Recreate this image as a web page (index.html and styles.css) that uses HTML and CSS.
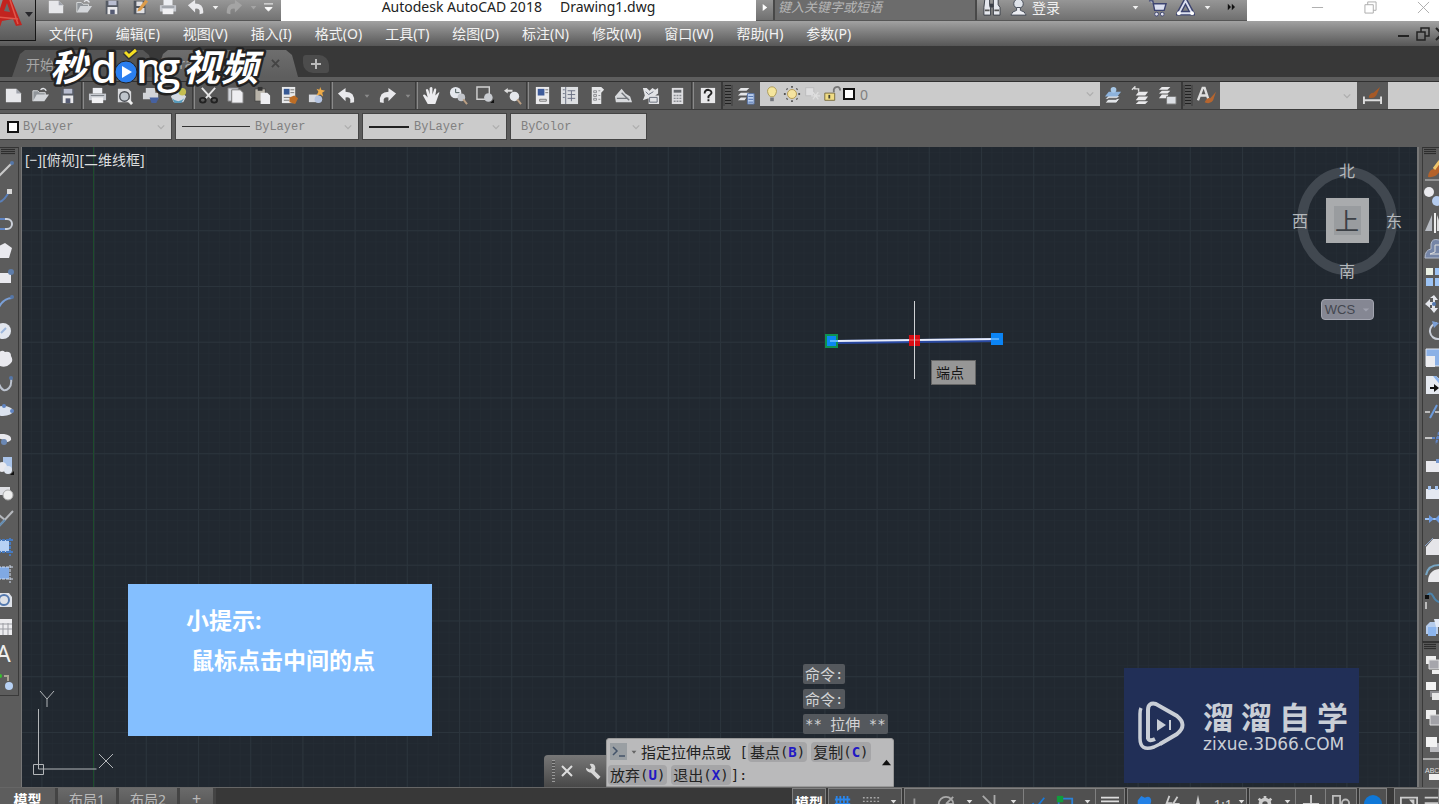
FILE: index.html
```html
<!DOCTYPE html>
<html lang="zh-CN">
<head>
<meta charset="utf-8">
<title>Autodesk AutoCAD 2018</title>
<link rel="stylesheet" href="styles.css">
</head>
<body>
<svg class="defs" aria-hidden="true">
  <symbol id="new" viewBox="0 0 20 20"><path d="M2 3h11l5 5v9H2z" fill="#e6e7ea"/><path d="M13 3v5h5z" fill="#9fa3ab"/></symbol>
  <symbol id="open" viewBox="0 0 20 20"><path d="M2 16V5h5l2 2h6v3" fill="#8f9499" stroke="#dadcde"/><path d="M2 16l4-7h13l-5 7z" fill="#d3d6da"/><path d="M10 4q4-3 6 1" fill="none" stroke="#e4e6ea" stroke-width="1.5"/></symbol>
  <symbol id="save" viewBox="0 0 20 20"><path d="M3 3h14v15H3z" fill="#565b64"/><path d="M6 3h9v5H6z" fill="#b8bdd0"/><path d="M5 10h11v8H5z" fill="#e9e9eb"/><path d="M8 13h5v5H8z" fill="#555b73"/></symbol>
  <symbol id="saveas" viewBox="0 0 20 20"><path d="M3 3h13v15H3z" fill="#50555d"/><path d="M6 4h7v5H6zM6 11h9v6H6z" fill="#e0e0e3"/><path d="M8 12L16 2l3 2-8 10-4 1z" fill="#dc9c4b"/></symbol>
  <symbol id="print" viewBox="0 0 20 20"><path d="M5 2h10v6H5z" fill="#eceef2"/><path d="M1 8h18v7H1z" fill="#c7cad0"/><path d="M4 12h12v6H4z" fill="#f0f0f2"/><path d="M3 10h14" stroke="#777b82"/></symbol>
  <symbol id="preview" viewBox="0 0 20 20"><path d="M3 3h11l3 3v11H3z" fill="#d9dadd"/><circle cx="10" cy="11" r="5" fill="#bfc5cc" stroke="#4b4f55" stroke-width="1.5"/><path d="M14 15l4 4" stroke="#eee" stroke-width="3"/></symbol>
  <symbol id="publish" viewBox="0 0 20 20"><path d="M4 2h10v5H4zM1 7h16v7H1z" fill="#d2d4d8"/><path d="M8 12h10l-3 6h-5z" fill="#4661a0"/></symbol>
  <symbol id="dwf" viewBox="0 0 20 20"><path d="M2 11l8-8 8 8-3 6H5z" fill="#d5dae1"/><circle cx="14" cy="6" r="4" fill="#c4bd50"/><path d="M3 13q7 6 13 0l-3 5H6z" fill="#5799b9"/></symbol>
  <symbol id="cut" viewBox="0 0 20 20"><path d="M3 2l10 11M17 2L7 13" stroke="#e4e4e4" stroke-width="2"/><ellipse cx="4" cy="15" rx="3" ry="2.500" fill="none" stroke="#222" stroke-width="2"/><ellipse cx="16" cy="15" rx="3" ry="2.500" fill="none" stroke="#222" stroke-width="2"/></symbol>
  <symbol id="copy" viewBox="0 0 20 20"><path d="M2 2h11v14H2z" fill="#d1d4da" stroke="#777"/><path d="M6 4h9l3 3v11H6z" fill="#eeeef1" stroke="#777"/></symbol>
  <symbol id="paste" viewBox="0 0 20 20"><path d="M2 3h11v13H2z" fill="#b9b4aa" stroke="#444"/><path d="M5 1h5v4H5z" fill="#333"/><path d="M8 7h7l3 3v9H8z" fill="#eeeef1"/></symbol>
  <symbol id="match" viewBox="0 0 20 20"><path d="M2 1h14v17H2z" fill="#e8e9eb"/><path d="M4 3h6v6H4z" fill="#365995"/><path d="M11 4h4M11 7h4M4 12h7M4 15h6" stroke="#777"/><path d="M10 12l5-2 4 3-3 6-6-2z" fill="#bd6d25"/></symbol>
  <symbol id="blockedit" viewBox="0 0 20 20"><path d="M2 9h10v8H2z" fill="#d7d9df"/><circle cx="12" cy="14" r="4" fill="#b5c4e0"/><path d="M14 1l1 3 4 1-3 2 1 4-3-2-4 1 2-4-2-3 3 1z" fill="#edaa48"/></symbol>
  <symbol id="undo" viewBox="0 0 20 20"><path d="M1 8l8-6v4q10 0 9 11l-4 1v-4q-1-3-5-2v4z" fill="#e9e9ec"/></symbol>
  <symbol id="redo" viewBox="0 0 20 20"><path d="M19 8l-8-6v4Q1 6 2 17l4 1v-4q1-3 5-2v4z" fill="currentColor"/></symbol>
  <symbol id="pan" viewBox="0 0 20 20"><path d="M6 19L1 10q1-2 3 0l2 2L4 4q2-2 3 1l1 4V2q2-2 3 0v7l2-6q2-1 2 1l-1 6 3-3q2-1 1 1l-4 11z" fill="#ececef"/></symbol>
  <symbol id="zoomrt" viewBox="0 0 20 20"><circle cx="7" cy="7" r="6" fill="#e4e7ed"/><path d="M7 3v4h4" stroke="#455" fill="none"/><circle cx="13" cy="12" r="4" fill="#c1c4ca"/><path d="M15 14l4 5" stroke="#bb9f83" stroke-width="2"/></symbol>
  <symbol id="zoomwin" viewBox="0 0 20 20"><path d="M1 1h13v13H1z" fill="none" stroke="#d2d2d2" stroke-width="1.500"/><circle cx="13" cy="12" r="4.500" fill="#c9ccd1"/><path d="M15 18h4v-4z" fill="#111"/></symbol>
  <symbol id="zoomprev" viewBox="0 0 20 20"><path d="M1 5l4-3v2h5v2H5v2z" fill="#ddd"/><circle cx="12" cy="11" r="5" fill="#e4e7eb"/><path d="M15 14l4 5" stroke="#bb9f83" stroke-width="2"/></symbol>
  <symbol id="props" viewBox="0 0 20 20"><path d="M3 1h14v18H3z" fill="#eaeaec"/><path d="M5 3h7v7H5z" fill="#3e5b9a"/><path d="M13 4h3M13 7h3M7 14h7v2H7z" stroke="#777" fill="none"/></symbol>
  <symbol id="dc" viewBox="0 0 20 20"><path d="M1 1h18v18H1z" fill="#dddfe2"/><path d="M6 1v18M12 5v11M8 5h8M8 9h8M8 13h8M3 4h2M3 8h2M3 12h2" stroke="#697083" fill="none"/></symbol>
  <symbol id="palette" viewBox="0 0 20 20"><path d="M5 1h10l3 3-3 3v12H5z" fill="#e4e5e7"/><path d="M7 5h3v2H7zm0 4h3v2H7zm0 4h3v2H7zM12 5h2m-2 5h2m-2 4h2" stroke="#8c8d91" fill="none"/></symbol>
  <symbol id="sheet" viewBox="0 0 20 20"><path d="M1 11L8 3l4 5 5 3 2 6H2z" fill="#d8dadd"/><path d="M8 7l8 8M3 13h12" stroke="#73777d" stroke-width="1.500"/></symbol>
  <symbol id="markup" viewBox="0 0 20 20"><path d="M2 2h4l3 3 3-3 3 2 3-2v6l-3 2h4v9H8v-6l-6 2 2-5z" fill="#e2e3e6"/><path d="M5 6l3 3 5-3M9 12h8v5H9z" stroke="#666d7a" fill="none"/></symbol>
  <symbol id="calc" viewBox="0 0 20 20"><path d="M4 2h12v17H4z" fill="#dddde0"/><path d="M6 4h8v3H6z" fill="#65686d"/><path d="M6 10h8M6 13h8M6 16h8" stroke="#8b8e93" stroke-width="1.500" stroke-dasharray="2 1"/></symbol>
  <symbol id="help" viewBox="0 0 20 20"><path d="M3 2h15v16H3z" fill="#e8e8ea"/><path d="M7 8q0-4 4-4 4 1 3 4l-3 3v2m0 1v2" stroke="#222" fill="none" stroke-width="2"/></symbol>
  <symbol id="layers" viewBox="0 0 20 20"><path d="M4 2h9l-3 3H1zM4 7h9l-3 3H1zM4 12h6l-2 3H1z" fill="#e5e6e8"/><path d="M11 8h7v11h-7z" fill="#bcd0ee" stroke="#5974a4"/><path d="M12 11h5m-5 3h5m-5 3h5" stroke="#4a6caa"/></symbol>
  <symbol id="layercur" viewBox="0 0 20 20"><path d="M5 13h12l-4 5H1zM5 10h12l-4 4H1z" fill="#e2e5e9" stroke="#555"/><path d="M5 6h13l-4 5H1z" fill="#8eb3dc"/><circle cx="10" cy="4" r="3" fill="#a7c8e8"/></symbol>
  <symbol id="layerprev" viewBox="0 0 20 20"><path d="M8 6h10l-3 4H5zM8 11h10l-3 4H5zM8 16h10l-3 3H5z" fill="#e9e9eb"/><path d="M1 4l3-3v2h4v3" fill="none" stroke="#ddd" stroke-width="1.500"/></symbol>
  <symbol id="layerstate" viewBox="0 0 20 20"><path d="M4 1h9l-3 3H1zM4 5h9l-3 3H1zM4 9h7l-2 4H1z" fill="#e9e9eb"/><path d="M9 11h10v8H9z" fill="#dcdfe4" stroke="#777"/></symbol>
  <symbol id="bulb" viewBox="0 0 20 20"><path d="M5 7a5 5 0 0 1 10 0q0 3-3 6H8Q5 10 5 7z" fill="#f4e59c" stroke="#aa9857"/><path d="M8 14h4v4H8z" fill="#75787e"/></symbol>
  <symbol id="sun" viewBox="0 0 20 20"><circle cx="10" cy="10" r="5" fill="#f5e3a0" stroke="#b3964c"/><path d="M10 1v2m0 14v2M1 10h2m14 0h2M4 4l1 1m10 10 1 1m0-12-1 1M5 15l-1 1" stroke="#555" stroke-width="2"/></symbol>
  <symbol id="vpfreeze" viewBox="0 0 20 20"><path d="M3 3h9v9H3z" fill="#dededf" stroke="#bbb"/><path d="M11 8l6 8M17 8l-6 8M9 12h10" stroke="#dfdfdf" stroke-width="1.500"/></symbol>
  <symbol id="lock" viewBox="0 0 20 20"><path d="M2 9h11v8H2z" fill="#f0dc84" stroke="#74683a"/><path d="M12 8V5q1-3 4-3t3 4" fill="none" stroke="#777" stroke-width="2"/><path d="M7 11v4" stroke="#443" stroke-width="2"/></symbol>
  <symbol id="textstyle" viewBox="0 0 20 20"><path d="M1 15L6 2h2l4 12M3 10h7" fill="none" stroke="#dedede" stroke-width="2.500"/><path d="M8 17q3-6 6-4l6-7-3 9q-3 5-9 2z" fill="#b5652f"/></symbol>
  <symbol id="dimstyle" viewBox="0 0 20 20"><path d="M1 11v8M19 11v8M1 15h18" stroke="#ddd" stroke-width="2"/><path d="M6 12q1-5 5-5l7-6-4 9q-3 4-8 2z" fill="#a55927"/></symbol>
  <symbol id="dd" viewBox="0 0 10 10"><path d="M1 3h8L5 8z" fill="currentColor"/></symbol>
  <symbol id="chev" viewBox="0 0 10 10"><path d="M1 3l4 4 4-4" fill="none" stroke="#adadad" stroke-width="1.500"/></symbol>
</svg>

<header class="titlebar">
  <nav class="quick" aria-label="快速访问">
    <button aria-label="新建"><svg><use href="#new"/></svg></button>
    <button aria-label="打开"><svg><use href="#open"/></svg></button>
    <button aria-label="保存"><svg><use href="#save"/></svg></button>
    <button aria-label="另存为"><svg><use href="#saveas"/></svg></button>
    <button aria-label="打印"><svg><use href="#print"/></svg></button>
    <button aria-label="放弃"><svg><use href="#undo"/></svg></button>
    <button class="drop" aria-label="放弃列表"><svg><use href="#dd"/></svg></button>
    <button class="dim" aria-label="重做"><svg><use href="#redo"/></svg></button>
    <button class="drop dim" aria-label="重做列表"><svg><use href="#dd"/></svg></button>
    <button class="drop custom" aria-label="自定义"><svg viewBox="0 0 10 10"><path d="M0 1h10M1 5h8L5 9z" fill="#fff" stroke="#fff"/></svg></button>
  </nav>
  <div class="caption"><span>Autodesk AutoCAD 2018</span><span>Drawing1.dwg</span></div>
  <div class="infocenter">
    <button class="flip" aria-label="折叠"><svg viewBox="0 0 10 10"><path d="M3 1l5 4-5 4z" fill="#fff"/></svg></button>
    <input class="search" type="text" placeholder="键入关键字或短语" aria-label="搜索">
    <button class="find" aria-label="查找"><svg viewBox="0 0 20 20"><path d="M3 1h5v6l1 3v8H2v-8zM12 1h5v6l2 3v8h-7v-8z" fill="#e6e8ee" stroke="#3b3f48"/><path d="M8 6h4v4H8z" fill="#3b3f48"/><path d="M3 13h5m5 0h5" stroke="#555" stroke-width="2"/></svg></button>
    <button class="login"><svg viewBox="0 0 20 20"><circle cx="10" cy="6" r="5" fill="#dfe3ea" stroke="#454b56"/><path d="M2 18q1-4 6-5v-3h4v3q5 1 6 5z" fill="#eceef3" stroke="#454b56"/></svg>登录</button>
    <button class="drop" aria-label="登录选项"><svg><use href="#dd"/></svg></button>
    <button class="find" aria-label="商店"><svg viewBox="0 0 20 20"><path d="M1 3h4l2 10h10l2-7H6" fill="#dce0f0" stroke="#3d4470" stroke-width="1.500"/><circle cx="9" cy="17" r="2" fill="#e4e4f0" stroke="#3d4470"/><circle cx="15" cy="17" r="2" fill="#e4e4f0" stroke="#3d4470"/></svg></button>
    <button class="find" aria-label="应用"><svg viewBox="0 0 20 20"><path d="M10 3L3 16h14z" fill="none" stroke="#3d4470" stroke-width="5"/><path d="M10 3L3 16h14z" fill="none" stroke="#dce0f0" stroke-width="2"/><circle cx="3" cy="16" r="2" fill="#fff"/><circle cx="17" cy="16" r="2" fill="#fff"/></svg></button>
    <button class="drop" aria-label="应用列表"><svg><use href="#dd"/></svg></button>
    <button class="more" aria-label="更多"><svg viewBox="0 0 10 10"><path d="M1 1l4 4-4 4zM6 1l4 4-4 4z" fill="#111"/></svg></button>
  </div>
  <div class="window">
    <button aria-label="最小化"><svg viewBox="0 0 14 14"><path d="M1 7h12" stroke="#aaa"/></svg></button>
    <button aria-label="还原"><svg viewBox="0 0 14 14"><path d="M1 4h9v9H1zM4 4V1h9v9h-3" stroke="#aaa" fill="none"/></svg></button>
    <button aria-label="关闭"><svg viewBox="0 0 14 14"><path d="M1 1l12 12M13 1L1 13" stroke="#aaa"/></svg></button>
  </div>
</header>

<button class="appmenu" aria-label="应用程序菜单"><svg viewBox="0 0 36 40"><path d="M-6 27L4-4h6l12 29-6 1-3-7-11 2-2 6z" fill="#c2241f"/><path d="M4 11l3-8 3 9z" fill="#6a6a6a"/><path d="M-2 17l20 2M9-3l9 27" stroke="#e0574b" stroke-width="1.500"/><path d="M25 12h8l-4 5z" fill="#27272b"/></svg></button>

<div class="menubar">
  <nav>
    <a href="#">文件(F)</a><a href="#">编辑(E)</a><a href="#">视图(V)</a><a href="#">插入(I)</a><a href="#">格式(O)</a><a href="#">工具(T)</a><a href="#">绘图(D)</a><a href="#">标注(N)</a><a href="#">修改(M)</a><a href="#">窗口(W)</a><a href="#">帮助(H)</a><a href="#">参数(P)</a>
  </nav>
  <div class="docwin">
    <button aria-label="最小化文档"><svg viewBox="0 0 14 14"><path d="M1 9h11" stroke="#222" stroke-width="2"/></svg></button>
    <button aria-label="还原文档"><svg viewBox="0 0 14 14"><path d="M1 5h8v8H1zM5 5V1h8v8H9" stroke="#222" stroke-width="1.500" fill="none"/></svg></button>
    <button aria-label="关闭文档"><svg viewBox="0 0 14 14"><path d="M1 1l12 12M13 1L1 13" stroke="#222" stroke-width="2"/></svg></button>
  </div>
</div>

<div class="filetabs">
  <button class="ftab">开始</button>
  <button class="ftab active"><span>Drawing1*</span><svg viewBox="0 0 10 10"><path d="M1 1l8 8M9 1L1 9" stroke="#444" stroke-width="2"/></svg></button>
  <button class="ftab add" aria-label="新图形"><svg viewBox="0 0 10 10"><path d="M5 0v10M0 5h10" stroke="#bbb" stroke-width="2"/></svg></button>
</div>

<svg class="mark" viewBox="0 0 220 56" role="img" aria-label="秒dong视频">
  <g class="mark-text">
    <text class="han" x="5" y="36">秒</text>
    <text class="lat" x="46" y="38">d</text>
    <text class="lat" x="91" y="38">n</text>
    <text class="lat" x="112" y="38">g</text>
    <text class="han" x="138" y="36">视</text>
    <text class="han" x="176" y="36">频</text>
  </g>
  <circle cx="81" cy="27" r="11" fill="#2b7ff0" stroke="#222" stroke-width="1"/>
  <path d="M77 21l10 6-10 6z" fill="#fff"/>
  <path d="M80 7l4 4 7-6" fill="none" stroke="#333" stroke-width="6"/>
  <path d="M80 7l4 4 7-6" fill="none" stroke="#f6df22" stroke-width="3"/>
</svg>

<div class="toolbar">
  <div class="tools">
    <button aria-label="新建"><svg><use href="#new"/></svg></button><button aria-label="打开"><svg><use href="#open"/></svg></button><button aria-label="保存"><svg><use href="#save"/></svg></button>
    <i></i>
    <button aria-label="打印"><svg><use href="#print"/></svg></button><button aria-label="预览"><svg><use href="#preview"/></svg></button><button aria-label="发布"><svg><use href="#publish"/></svg></button><button aria-label="三维打印"><svg><use href="#dwf"/></svg></button>
    <i></i>
    <button aria-label="剪切"><svg><use href="#cut"/></svg></button><button aria-label="复制"><svg><use href="#copy"/></svg></button><button aria-label="粘贴"><svg><use href="#paste"/></svg></button><button aria-label="特性匹配"><svg><use href="#match"/></svg></button><button aria-label="块编辑器"><svg><use href="#blockedit"/></svg></button>
    <i></i>
    <button aria-label="放弃"><svg><use href="#undo"/></svg></button><button class="drop" aria-label="放弃列表"><svg><use href="#dd"/></svg></button><button aria-label="重做"><svg><use href="#redo"/></svg></button><button class="drop" aria-label="重做列表"><svg><use href="#dd"/></svg></button>
    <i></i>
    <button aria-label="平移"><svg><use href="#pan"/></svg></button><button aria-label="实时缩放"><svg><use href="#zoomrt"/></svg></button><button aria-label="窗口缩放"><svg><use href="#zoomwin"/></svg></button><button aria-label="缩放上一个"><svg><use href="#zoomprev"/></svg></button>
    <i></i>
    <button aria-label="特性"><svg><use href="#props"/></svg></button><button aria-label="设计中心"><svg><use href="#dc"/></svg></button><button aria-label="工具选项板"><svg><use href="#palette"/></svg></button><button aria-label="图纸集"><svg><use href="#sheet"/></svg></button><button aria-label="标记集"><svg><use href="#markup"/></svg></button><button aria-label="计算器"><svg><use href="#calc"/></svg></button>
    <i></i>
    <button aria-label="帮助"><svg><use href="#help"/></svg></button>
  </div>
  <div class="tools layertools">
    <b class="grip"></b>
    <button aria-label="图层特性"><svg><use href="#layers"/></svg></button>
    <div class="combo layercombo">
      <svg><use href="#bulb"/></svg><svg><use href="#sun"/></svg><svg><use href="#vpfreeze"/></svg><svg><use href="#lock"/></svg><em class="swatch"></em>
      <select aria-label="图层"><option>0</option></select><svg class="chev"><use href="#chev"/></svg>
    </div>
    <button aria-label="置为当前"><svg><use href="#layercur"/></svg></button><button aria-label="上一个图层"><svg><use href="#layerprev"/></svg></button><button aria-label="图层状态"><svg><use href="#layerstate"/></svg></button>
  </div>
  <div class="tools">
    <b class="grip"></b>
    <button aria-label="文字样式"><svg><use href="#textstyle"/></svg></button>
    <div class="combo textcombo"><select aria-label="文字样式列表"><option></option></select><svg class="chev"><use href="#chev"/></svg></div>
    <button class="wide" aria-label="标注样式"><svg><use href="#dimstyle"/></svg></button>
    <div class="combo dimcombo"><select aria-label="标注样式列表"><option></option></select></div>
  </div>
</div>

<div class="propbar">
  <div class="combo color"><em class="swatch"></em><select aria-label="颜色"><option>ByLayer</option></select><svg class="chev"><use href="#chev"/></svg></div>
  <div class="combo ltype"><em class="line"></em><select aria-label="线型"><option>ByLayer</option></select><svg class="chev"><use href="#chev"/></svg></div>
  <div class="combo lweight"><em class="line thick"></em><select aria-label="线宽"><option>ByLayer</option></select><svg class="chev"><use href="#chev"/></svg></div>
  <div class="combo pstyle"><select aria-label="打印样式"><option>ByColor</option></select><svg class="chev"><use href="#chev"/></svg></div>
</div>

<main class="work">
  <aside class="side left">
    <div class="sidepanel">
      <b class="sgrip"></b>
      <button aria-label="直线"><svg viewBox="0 0 16 27"><path d="M-2 22L12 8" stroke="#c9c9c9" stroke-width="2"/><circle cx="12" cy="8" r="2" fill="#5577a8"/></svg></button>
      <button aria-label="构造线"><svg viewBox="0 0 16 27"><path d="M-1 20q5-1 10-10" stroke="#5a7fb8" stroke-width="2" fill="none"/><path d="M7 7h5v5H7z" fill="#d8d8d8"/></svg></button>
      <button aria-label="多段线"><svg viewBox="0 0 16 27"><path d="M0 10h7a5 5 0 0 1 0 10H0" fill="none" stroke="#ccd1da" stroke-width="2"/><path d="M0 10h5M0 20h5" stroke="#5f84c2" stroke-width="2"/></svg></button>
      <button aria-label="多边形"><svg viewBox="0 0 16 27"><path d="M-3 11L5 7l7 5-3 10h-12z" fill="#e9e9ee"/></svg></button>
      <button aria-label="矩形"><svg viewBox="0 0 16 27"><path d="M-2 10h13v10H-2z" fill="#e9e9ee"/><circle cx="11" cy="9" r="3" fill="#5f7da9"/></svg></button>
      <button aria-label="圆弧"><svg viewBox="0 0 16 27"><path d="M-1 17Q4 8 12 8" fill="none" stroke="#7a9fd6" stroke-width="2"/><circle cx="12" cy="7" r="2" fill="#5577a8"/></svg></button>
      <button aria-label="圆"><svg viewBox="0 0 16 27"><circle cx="3" cy="14" r="8" fill="#e2e6ee"/><path d="M1 16l5-5" stroke="#9db7dc" stroke-width="2"/></svg></button>
      <button aria-label="修订云线"><svg viewBox="0 0 16 27"><path d="M-2 9q4-4 7-1 6-1 6 4 3 5-1 8-5 5-12 1z" fill="#e9e9ee"/></svg></button>
      <button aria-label="样条曲线"><svg viewBox="0 0 16 27"><path d="M-1 13q4 10 10 4 3-3 2-10" fill="none" stroke="#bcc3cf" stroke-width="2"/><circle cx="11" cy="7" r="2" fill="#5577a8"/></svg></button>
      <button aria-label="椭圆"><svg viewBox="0 0 16 27"><ellipse cx="3" cy="13" rx="10" ry="5" fill="#dbe2ee"/><circle cx="4" cy="8" r="2" fill="#5f84c2"/><circle cx="12" cy="13" r="2" fill="#5f84c2"/></svg></button>
      <button aria-label="椭圆弧"><svg viewBox="0 0 16 27"><path d="M-3 9h7q8 1 7 6-4 4-7 0l-7-2z" fill="#e9e9ee"/><circle cx="4" cy="17" r="3" fill="#6b88b4"/></svg></button>
      <button aria-label="插入块"><svg viewBox="0 0 16 27"><path d="M3 5h9v14H3z" fill="#a9c3e9"/><circle cx="2" cy="15" r="5" fill="#e9e9ee"/><circle cx="8" cy="18" r="4" fill="#dfe6f1"/><path d="M10 23h4v-4z" fill="#111"/></svg></button>
      <button aria-label="创建块"><svg viewBox="0 0 16 27"><path d="M-2 8h12v8H-2z" fill="#dedfe4"/><circle cx="8" cy="16" r="5" fill="#eee" stroke="#aaa"/></svg></button>
      <button aria-label="点"><svg viewBox="0 0 16 27"><path d="M-1 20L13 5M-1 9l6 5" stroke="#b5b8bd" stroke-width="2"/><path d="M-1 20l6-6" stroke="#648bb0" stroke-width="2"/></svg></button>
      <button aria-label="图案填充"><svg viewBox="0 0 16 27"><path d="M-2 7h11v12H-2z" fill="#b7d1f4"/><path d="M-2 19h15M10 5v18M-2 7h15" stroke="#477abf" stroke-width="2" stroke-dasharray="3 1"/></svg></button>
      <button aria-label="渐变色"><svg viewBox="0 0 16 27"><path d="M-2 7h11v12H-2z" fill="#80a9e3"/><path d="M-2 19h15M10 5v18M-2 7h15" stroke="#d3def0" stroke-width="1" stroke-dasharray="3 1"/></svg></button>
      <button aria-label="面域"><svg viewBox="0 0 16 27"><path d="M-2 6h11l3 4v10H-2z" fill="#dfe2e8"/><circle cx="4" cy="13" r="5" fill="#dfe2e8" stroke="#5579ae" stroke-width="2"/></svg></button>
      <button aria-label="表格"><svg viewBox="0 0 16 27"><path d="M-2 5h14v16H-2z" fill="#ececef"/><path d="M-2 10h14M-2 15h14M3 9v12M8 9v12" stroke="#9a9ca2"/></svg></button>
      <button aria-label="多行文字"><svg viewBox="0 0 16 27"><text x="-4" y="21" class="glyph">A</text></svg></button>
      <button aria-label="添加选定对象"><svg viewBox="0 0 16 27"><circle cx="0" cy="8" r="2" fill="#35c22d"/><path d="M4 8h4v5" stroke="#aaa496" fill="none" stroke-width="2"/><circle cx="9" cy="18" r="4" fill="#b7d1f4"/></svg></button>
    </div>
  </aside>

  <section class="canvas" aria-label="绘图区">
    <svg class="gridlines" aria-hidden="true">
      <defs>
        <pattern id="minor" width="10.44" height="11.15" x="19.4" y="27.5" patternUnits="userSpaceOnUse"><path d="M0 0H11M0 0V12" stroke="#252d35" stroke-width="1"/></pattern>
        <pattern id="major" width="52.2" height="55.75" x="19.4" y="27.5" patternUnits="userSpaceOnUse"><path d="M0 .5H53M.5 0V56" stroke="#2b343c" stroke-width="1"/></pattern>
      </defs>
      <rect width="100%" height="100%" fill="url(#minor)"/>
      <rect width="100%" height="100%" fill="url(#major)"/>
      <path d="M71.500 0V1200" stroke="#1d4c2c" stroke-width="1"/>
    </svg>
    <div class="viewlabel">[−][俯视][二维线框]</div>

    <svg class="entity" viewBox="0 0 190 90" aria-hidden="true">
      <path d="M16 46L178 44" stroke="#2948a0" stroke-width="4"/>
      <path d="M16 45L178 43" stroke="#e8edfb" stroke-width="2"/>
      <path d="M5 38h13v14H5z" fill="#0f9150"/><path d="M7 40h9v10H7z" fill="#0b87f2"/><path d="M10 45h8" stroke="#5bb5ff" stroke-width="2"/>
      <path d="M171 37h12v12h-12z" fill="#0b84f4"/><path d="M170 43h9" stroke="#9bd0ff"/>
      <path d="M89 39h11v11H89z" fill="#d80b12"/><path d="M89 44h11" stroke="#ef6b6b"/>
      <path d="M94.500 5v78" stroke="#cfd1d4" stroke-width="1"/>
    </svg>
    <div class="snaptip">端点</div>

    <div class="viewcube">
      <svg viewBox="0 0 110 120" aria-hidden="true">
        <ellipse cx="55" cy="60" rx="45" ry="49" fill="none" stroke="#414850" stroke-width="10"/>
        <path d="M34 37h43v45H34z" fill="#a9abad"/><path d="M42 45h27v29H42z" fill="#999c9f"/>
      </svg>
      <span class="n">北</span><span class="w">西</span><span class="c">上</span><span class="e">东</span><span class="s">南</span>
    </div>
    <button class="wcs">WCS<svg viewBox="0 0 10 10"><path d="M1 3h8L5 7z" fill="#9fa1ad"/></svg></button>

    <div class="hint"><p>小提示:</p><p class="second">鼠标点击中间的点</p></div>

    <svg class="ucs" viewBox="0 0 90 100" aria-hidden="true">
      <path d="M6.500 24v60h58M1.500 79.500h10v10h-10z" fill="none" stroke="#b3b6b9" stroke-width="1"/>
      <path d="M8 6l7 8 7-8M15 14v8M67 69l14 14M81 69L67 83" fill="none" stroke="#b3b6b9" stroke-width="1"/>
    </svg>

    <div class="cmd">
      <div class="history"><span>命令<tt>:</tt></span><span>命令<tt>:</tt></span><span><tt>** </tt>拉伸<tt> **</tt></span></div>
      <div class="cmdrow">
        <div class="handle">
          <b></b>
          <button aria-label="关闭命令行"><svg viewBox="0 0 12 12"><path d="M1 1l10 10M11 1L1 11" stroke="#ddd" stroke-width="2"/></svg></button>
          <button aria-label="自定义命令行"><svg viewBox="0 0 18 18"><path d="M7 8l8 8" stroke="#d6d6d6" stroke-width="4"/><path d="M5 1q6-1 6 5-1 5-6 4-4-1-4-5l4 2 2-2z" fill="#d6d6d6"/></svg></button>
        </div>
        <div class="prompt">
          <div class="ptext">
            <div><svg class="cli" viewBox="0 0 17 17"><path d="M0 0h17v17H0z" fill="#9a9fa3"/><path d="M3 4l4 4-4 4M9 13h6" fill="none" stroke="#44546a" stroke-width="1.500"/></svg><svg class="cdd"><use href="#dd"/></svg>指定拉伸点或<tt> [</tt><button>基点<tt>(<strong>B</strong>)</tt></button> <button>复制<tt>(<strong>C</strong>)</tt></button></div>
            <div><button>放弃<tt>(<strong>U</strong>)</tt></button> <button class="last">退出<tt>(<strong>X</strong>)</tt></button><tt>]:</tt></div>
          </div>
          <button class="expand" aria-label="展开"><svg viewBox="0 0 10 10"><path d="M0 8h10L5 2z" fill="#111"/></svg></button>
        </div>
      </div>
    </div>

    <div class="brand">
      <svg viewBox="0 0 48 50" aria-hidden="true">
        <path d="M3 7q-1 2-1 6v24q0 14 14 9l8-4" fill="none" stroke="#c9ced6" stroke-width="3.500"/>
        <path d="M10 38V9q0-8 8-6l21 12q11 9 0 18L22 43" fill="none" stroke="#c9ced6" stroke-width="4"/>
        <path d="M10 34v3q1 4 7 1" fill="none" stroke="#c9ced6" stroke-width="4"/>
        <path d="M19 18l9 6-9 6z" fill="#c9ced6"/><path d="M32 19v10" stroke="#c9ced6" stroke-width="2"/>
      </svg>
      <div class="brandtext"><div class="cn"><span>溜</span><span>溜</span><span>自</span><span>学</span></div><div class="url">zixue.3D66.COM</div></div>
    </div>
  </section>

  <aside class="side right">
    <div class="sidepanel">
      <b class="sgrip"></b>
      <button aria-label="删除"><svg viewBox="0 0 16 27"><path d="M5 22q1-8 6-8l6-8v10q-4 7-12 6z" fill="#b4622a"/><path d="M11 14l6-8" stroke="#f0c56c" stroke-width="3"/><path d="M2 25h14" stroke="#ccc"/></svg></button>
      <button aria-label="复制"><svg viewBox="0 0 16 27"><circle cx="6" cy="10" r="5" fill="#eaeaee"/><circle cx="14" cy="19" r="5" fill="#b4cbee"/></svg></button>
      <button aria-label="镜像"><svg viewBox="0 0 16 27"><path d="M2 22L9 6v16z" fill="#b7bbc2"/><path d="M12 4v20" stroke="#eee" stroke-width="2"/><path d="M14 6v16h6z" fill="#ddd"/></svg></button>
      <button aria-label="偏移"><svg viewBox="0 0 16 27"><path d="M16 4q-7-2-8 4v5q-6 1-6 9h14" fill="#7585a6" stroke="#b4bccd" stroke-width="1"/><path d="M16 9h-4v7l-5 2h9" fill="none" stroke="#ddd"/></svg></button>
      <button aria-label="阵列"><svg viewBox="0 0 16 27"><path d="M3 5h7v7H3z" fill="#eaf0e4"/><path d="M12 5h6v7h-6zM3 15h7v8H3zM12 15h6v8h-6z" fill="#9cc3f4"/></svg></button>
      <button aria-label="移动"><svg viewBox="0 0 16 27"><path d="M11 5l4 5h-3v8h3l-4 5-4-5h2v-3H7v3l-5-4 5-5v3h3v-4H7z" fill="#e4e6ec"/><circle cx="11" cy="14" r="2" fill="#5479b0"/></svg></button>
      <button aria-label="旋转"><svg viewBox="0 0 16 27"><path d="M14 6A8 8 0 1 0 16 22" fill="none" stroke="#c9ced8" stroke-width="2"/><path d="M9 4l7 2-5 5z" fill="#7b9ed4"/></svg></button>
      <button aria-label="缩放"><svg viewBox="0 0 16 27"><path d="M3 5h14v17H3z" fill="#8cb1e6" stroke="#dfe4ee"/><path d="M3 12h9v11H3z" fill="#ececf0"/></svg></button>
      <button aria-label="拉伸"><svg viewBox="0 0 16 27"><path d="M3 5h10l5 4v14H3z" fill="#e5e9f0"/><path d="M10 5h3l5 5v5z" fill="#8ab1e8"/><path d="M7 17h7" stroke="#111" stroke-width="2"/><path d="M11 13l5 4-5 4z" fill="#111"/></svg></button>
      <button aria-label="修剪"><svg viewBox="0 0 16 27"><path d="M2 14h5m5 0h4" stroke="#bbb" stroke-width="2"/><path d="M14 7L7 20" stroke="#6c9ada" stroke-width="2"/></svg></button>
      <button aria-label="延伸"><svg viewBox="0 0 16 27"><path d="M2 13h7" stroke="#c4c4c4" stroke-width="2"/><path d="M9 13h7m0-6-3 12" stroke="#5f83c2" stroke-width="2" stroke-dasharray="3 1"/></svg></button>
      <button aria-label="打断于点"><svg viewBox="0 0 16 27"><path d="M3 9h14v11H3z" fill="#e9e9ee"/><path d="M13 7h3v4h-3z" fill="#7797cc"/></svg></button>
      <button aria-label="打断"><svg viewBox="0 0 16 27"><path d="M3 10h14v10H3z" fill="#e4e8f0"/><path d="M5 7h3v4H5zM12 7h3v4h-3z" fill="#a3c3f0"/></svg></button>
      <button aria-label="合并"><svg viewBox="0 0 16 27"><path d="M2 13h14" stroke="#9bc0f2" stroke-width="2"/><path d="M6 9l5 4-5 4zM16 9l-4 4 4 4z" fill="#6d9be0"/></svg></button>
      <button aria-label="倒角"><svg viewBox="0 0 16 27"><path d="M3 22v-8l7-8h8v16z" fill="#e5e5e9"/><path d="M2 13l8-8" stroke="#8ba3c8"/></svg></button>
      <button aria-label="圆角"><svg viewBox="0 0 16 27"><path d="M5 22q0-12 12-13v13z" fill="#e9e9ec"/><path d="M3 15Q5 5 16 5" fill="none" stroke="#77a5c4" stroke-width="2"/></svg></button>
      <button aria-label="光顺曲线"><svg viewBox="0 0 16 27"><path d="M3 22v-7" stroke="#bbb" stroke-width="2"/><path d="M3 11q4-8 7-2t7 6" fill="none" stroke="#4d83aa" stroke-width="2"/><path d="M2 8h4v4H2z" fill="#111"/></svg></button>
      <button aria-label="分解"><svg viewBox="0 0 16 27"><path d="M3 12l4-4h8v12H3z" fill="#b6cceb"/><path d="M5 13h8v9H5z" fill="#8db6ee"/><path d="M11 5h6v8h-4z" fill="#e4eaf5"/></svg></button>
    </div>
    <div class="sidepanel lower">
      <b class="sgrip"></b>
      <button aria-label="前置"><svg viewBox="0 0 16 27"><path d="M3 6h10v8H3z" fill="#eee"/><path d="M6 10h10v9H6z" fill="#a6a6ac" stroke="#ddd"/><path d="M9 20h8v4H9z" fill="#eee"/></svg></button>
      <button aria-label="后置"><svg viewBox="0 0 16 27"><path d="M3 5h10v8H3z" fill="#f3f3f3"/><path d="M7 14h9v6H7z" fill="#8c8c90"/><path d="M9 16h8v7H9z" fill="#e6e6e6"/></svg></button>
      <button aria-label="置于对象之上"><svg viewBox="0 0 16 27"><path d="M3 6h10v9H3z" fill="#eee"/><path d="M7 11h10v10H7z" fill="#a2a2a7" stroke="#ddd"/></svg></button>
      <button aria-label="置于对象之下"><svg viewBox="0 0 16 27"><path d="M7 12h10v9H7z" fill="#b9b9bd"/><path d="M3 6h11v10H3z" fill="#f2f2f2"/></svg></button>
      <hr>
      <button aria-label="注释前置"><svg viewBox="0 0 16 27"><text x="2" y="13" class="abc">ABC</text><path d="M6 14h12v6H6z" fill="#eee"/></svg></button>
    </div>
  </aside>
</main>

<footer class="status">
  <nav class="layouts"><button class="ltab on">模型</button><button class="ltab">布局1</button><button class="ltab">布局2</button><button class="ltab plus">+</button></nav>
  <div class="spanel s1"><button class="modeltext">模型</button></div>
  <div class="spanel s2">
    <button aria-label="栅格"><svg viewBox="0 0 20 20"><path d="M3 1v18M7 1v18M11 1v18M15 1v18M1 5h17M1 10h17" stroke="#2a86ec" stroke-width="2"/></svg></button>
    <button aria-label="捕捉"><svg viewBox="0 0 20 20"><path d="M1 3h18M1 7h18M1 11h18" stroke="#aaa" stroke-width="1.500" stroke-dasharray="2 2"/></svg></button>
    <button class="drop" aria-label="捕捉设置"><svg><use href="#dd"/></svg></button>
  </div>
  <div class="spanel s3">
    <button aria-label="正交"><svg viewBox="0 0 20 20"><path d="M6 4v14h12" fill="none" stroke="#999" stroke-width="2"/></svg></button>
    <button aria-label="极轴"><svg viewBox="0 0 20 20"><circle cx="10" cy="10" r="8" fill="none" stroke="#aaa" stroke-width="2"/><path d="M10 10l8-8M10 10h9" stroke="#aaa" stroke-width="2"/></svg></button>
    <button class="drop" aria-label="极轴设置"><svg><use href="#dd"/></svg></button>
    <button aria-label="等轴测"><svg viewBox="0 0 20 20"><path d="M2 1l12 12M15 0v14" stroke="#aaa" stroke-width="2"/></svg></button>
    <button class="drop" aria-label="等轴测设置"><svg><use href="#dd"/></svg></button>
    <button class="edge" aria-label="对象捕捉追踪"><svg viewBox="0 0 20 20"><path d="M4 9l4 5L17 3" fill="none" stroke="#1878d8" stroke-width="2"/></svg></button>
    <button aria-label="对象捕捉"><svg viewBox="0 0 20 20"><path d="M7 4h11v14H3V8" fill="none" stroke="#2b82d8" stroke-width="2"/><path d="M1 1h7v7H1z" fill="#0f9d3c"/></svg></button>
    <button class="drop" aria-label="捕捉模式"><svg><use href="#dd"/></svg></button>
    <button class="edge" aria-label="线宽"><svg viewBox="0 0 20 20"><path d="M0 3h20M0 7h20M0 12h20" stroke="#ddd" stroke-width="2"/></svg></button>
  </div>
  <div class="spanel s4">
    <button aria-label="注释可见性"><svg viewBox="0 0 20 20"><path d="M3 18V6l4-5 4 2q6-3 7 3 0 5-4 7l-2 5z" fill="#2381e6"/></svg></button>
    <button aria-label="自动缩放"><svg viewBox="0 0 20 20"><path d="M6 1L3 9h5l-3 9M15 2l-5 8h6l-4 8" fill="none" stroke="#ccc" stroke-width="2"/></svg></button>
    <button aria-label="注释比例"><svg viewBox="0 0 20 20"><path d="M10 0l4 18H6z" fill="#ccc"/></svg></button>
    <button class="ratio">1:1</button>
    <button class="drop" aria-label="比例列表"><svg><use href="#dd"/></svg></button>
  </div>
  <div class="spanel s5">
    <button aria-label="切换工作空间"><svg viewBox="0 0 20 20"><circle cx="10" cy="10" r="5" fill="none" stroke="#ccc" stroke-width="4"/><path d="M10 1v4M3 4l3 3M17 4l-3 3" stroke="#ccc" stroke-width="3"/></svg></button>
    <button class="drop" aria-label="工作空间列表"><svg><use href="#dd"/></svg></button>
    <button class="edge" aria-label="注释监视器"><svg viewBox="0 0 20 20"><path d="M10 0v20M1 10h18" stroke="#ccc" stroke-width="2"/></svg></button>
    <button class="edge" aria-label="隔离对象"><svg viewBox="0 0 20 20"><path d="M1 1h8v12H1z" fill="none" stroke="#bbb" stroke-width="2"/><circle cx="15" cy="9" r="4" fill="none" stroke="#bbb" stroke-width="2"/></svg></button>
  </div>
  <div class="spanel s6"><button aria-label="硬件加速"><svg viewBox="0 0 20 20"><circle cx="10" cy="10" r="10" fill="#0f78d8"/></svg></button></div>
  <div class="spanel s7">
    <button aria-label="全屏显示"><svg viewBox="0 0 20 20"><path d="M1 3h18v14H1z" fill="none" stroke="#ccc" stroke-width="2"/><path d="M10 5h6v7z" fill="#ccc"/></svg></button>
    <button aria-label="自定义"><svg viewBox="0 0 20 20"><path d="M3 3h16M3 9h16" stroke="#ccc" stroke-width="2"/></svg></button>
  </div>
</footer>
</body>
</html>
```

FILE: styles.css
```css
* { box-sizing: border-box; }
html, body { height: 100%; }
body {
  margin: 0;
  display: flex;
  flex-direction: column;
  position: relative;
  overflow: hidden;
  background: #5b5b5b;
  font-family: "Noto Sans", "Noto Sans CJK SC", sans-serif;
  font-size: 14px;
}
button {
  display: flex;
  align-items: center;
  justify-content: center;
  margin: 0;
  padding: 0;
  border: 0;
  background: none;
  color: inherit;
  font: inherit;
}
svg { display: block; flex: none; }
select, input {
  appearance: none;
  margin: 0;
  padding: 0;
  border: 0;
  border-radius: 0;
  background: none;
  font: inherit;
  color: inherit;
  min-width: 0;
}
.defs { position: absolute; width: 0; height: 0; }

/* title bar */
.titlebar { display: flex; flex: none; height: 21px; background: #fff; overflow: hidden; }
.quick {
  display: flex;
  align-items: flex-start;
  width: 281px;
  padding-left: 42px;
  background: linear-gradient(#979797, #737373);
  border-bottom: 1px solid #565656;
  color: #f0f0f0;
}
.quick button { width: 28px; height: 14px; flex: none; }
.quick svg { width: 18px; height: 18px; }
.quick .drop { width: 10px; }
.quick .drop svg { width: 7px; height: 7px; }
.quick .custom { width: 20px; }
.quick .custom svg { width: 9px; height: 9px; }
.quick .dim { color: #a4a4a4; }
.caption {
  flex: 1;
  display: flex;
  justify-content: center;
  gap: 18px;
  font-size: 14px;
  line-height: 14px;
  color: #222;
  white-space: nowrap;
}
.infocenter {
  display: flex;
  width: 491px;
  background: linear-gradient(#969696, #707070);
  border-bottom: 1px solid #565656;
  color: #f0f0f0;
}
.infocenter button { height: 14px; }
.flip { width: 17px; }
.flip svg { width: 9px; height: 9px; }
.search {
  width: 204px;
  height: 20px;
  padding: 0 0 7px 3px;
  background: #6c6c6c;
  border: solid #484848;
  border-width: 0 2px;
  font-size: 13px;
  font-style: italic;
}
.search::placeholder { color: #b5b5b5; opacity: 1; }
.find { width: 28px; }
.find svg, .login svg { width: 19px; height: 19px; }
.login { gap: 4px; flex: 1; justify-content: flex-start; padding-left: 4px; }
.infocenter .drop { width: 16px; }
.infocenter .drop svg { width: 7px; height: 7px; }
.more { width: 32px; }
.more svg { width: 8px; height: 8px; }
.window { display: flex; width: 192px; padding-left: 44px; }
.window button { width: 53px; height: 14px; flex: none; }
.window svg { width: 13px; height: 13px; }
.appmenu {
  position: absolute;
  left: 0;
  top: 0;
  width: 36px;
  height: 41px;
  background: linear-gradient(#8f8f8f, #5a5a5a);
  border: solid #151515;
  border-width: 0 1px 1px 0;
  overflow: hidden;
}
.appmenu svg { width: 36px; height: 40px; }

/* menu bar */
.menubar {
  display: flex;
  flex: none;
  align-items: center;
  justify-content: space-between;
  height: 25px;
  padding-left: 49px;
  background: linear-gradient(#a2a2a2, #8a8a8a 30%, #575757);
  overflow: hidden;
}
.menubar nav { display: flex; gap: 23px; }
.menubar a { color: #f2f2f2; text-decoration: none; line-height: 24px; white-space: nowrap; }
.docwin { display: flex; gap: 5px; margin-right: -10px; }
.docwin svg { width: 14px; height: 14px; }

/* drawing tabs */
.filetabs {
  display: flex;
  flex: none;
  align-items: flex-end;
  height: 35px;
  padding-left: 12px;
  background: #383838;
  border-bottom: 4px solid #5e5e5e;
}
.ftab {
  width: 143px;
  height: 27px;
  justify-content: space-between;
  padding: 0 18px 0 14px;
  background: #555;
  color: #a5a5a5;
  clip-path: polygon(0 100%, 8px 4px, 13px 0, 131px 0, 137px 5px, 100% 100%);
}
.ftab.active { background: linear-gradient(#6e6e6e, #5e5e5e); color: #aaa; }
.ftab svg { width: 9px; height: 9px; }
.ftab.add {
  width: 26px;
  height: 18px;
  margin: 0 0 4px 5px;
  padding: 0;
  justify-content: center;
  background: #4c4c4c;
  clip-path: none;
  border-radius: 3px 10px 3px 10px;
}
.ftab.add svg { width: 10px; height: 10px; }
.mark { position: absolute; left: 45px; top: 45px; width: 220px; height: 56px; overflow: visible; z-index: 2; }
.mark-text { fill: #fff; stroke: #222; stroke-width: 5px; stroke-linejoin: round; paint-order: stroke; font-weight: 700; font-style: italic; }
.han { font-family: "Noto Sans CJK SC", sans-serif; font-size: 37px; }
.lat { font-family: "Open Sans", sans-serif; font-size: 42px; font-style: normal; font-weight: 600; }

/* toolbars */
.toolbar {
  display: flex;
  flex: none;
  height: 29px;
  background: #585858;
  border-top: 1px solid #303030;
  border-bottom: 1px solid #3b3b3b;
}
.tools { display: flex; align-items: stretch; border-right: 2px solid #3a3a3a; color: #e9e9ec; flex: none; }
.tools:last-child { border-right: 0; }
.tools button { width: 27px; flex: none; }
.tools button svg { width: 19px; height: 19px; }
.tools .drop { width: 14px; color: #8a8a8a; }
.tools .drop svg { width: 6px; height: 6px; }
.tools .wide { width: 31px; }
.tools i { width: 3px; border-left: 1px solid #3c3c3c; border-right: 1px solid #8a8a8a; }
.layertools { flex: 1; }
.grip { width: 10px; margin: 3px 0; background: repeating-linear-gradient(#222 0 1px, #585858 1px 3px); border: solid #4a4a4a; border-width: 0 2px; }
.combo {
  display: flex;
  align-items: center;
  background: #cbcbcb;
  color: #808080;
  font-family: "Liberation Mono", monospace;
  font-size: 12px;
}
.combo select { flex: 1; align-self: stretch; }
.combo svg { width: 18px; height: 18px; }
.combo .chev { width: 8px; height: 8px; margin-right: 6px; }
.layercombo { flex: 1; gap: 2px; padding-left: 3px; border-bottom: 3px solid #4a4a4a; }
.layercombo select { padding-left: 3px; font-family: "Noto Sans", sans-serif; font-size: 14px; }
.textcombo { width: 137px; }
.dimcombo { width: 51px; }
.swatch { width: 12px; height: 12px; flex: none; background: #fff; border: 2px solid #111; }
.propbar { display: flex; flex: none; gap: 5px; height: 37px; padding: 4px 0 8px; background: #5c5c5c; }
.propbar .combo { box-shadow: 0 0 0 1px #444; }
.color { width: 171px; padding-left: 7px; gap: 4px; }
.ltype { width: 182px; padding-left: 6px; gap: 5px; }
.lweight { width: 143px; padding-left: 6px; gap: 5px; }
.pstyle { width: 135px; padding-left: 10px; }
.line { width: 68px; height: 1px; background: #333; }
.line.thick { width: 40px; height: 2px; background: #222; }

/* work area */
.work { flex: 1; display: flex; min-height: 0; background: #5c5c5c; }
.side { width: 22px; flex: none; overflow: hidden; }
.sidepanel { display: flex; flex-direction: column; border-top: 1px solid #333; }
.sidepanel button { width: 16px; height: 27px; flex: none; }
.sidepanel svg { width: 16px; height: 27px; }
.left .sidepanel { width: 19px; border-right: 1px solid #3a3a3a; border-bottom: 1px solid #3a3a3a; }
.left { border-right: 1px solid #777; }
.right { border-left: 2px solid #777; padding-left: 3px; }
.right .sidepanel { border-left: 1px solid #3a3a3a; }
.sgrip { height: 7px; margin: 0 3px 0 1px; background: repeating-linear-gradient(#555 0 1px, #222 1px 2px); opacity: .8; }
.lower { border-top: 2px solid #333; }
.lower hr { width: 100%; margin: 0; border: 0; border-top: 2px solid #aaa; }
.glyph { font: 23px "Noto Sans", sans-serif; fill: #eee; }
.abc { font: 7px "Liberation Sans", sans-serif; fill: #ddd; }

.canvas { flex: 1; position: relative; background: #212830; overflow: hidden; }
.gridlines { position: absolute; inset: 0; width: 100%; height: 100%; }
.viewlabel { position: relative; padding: 3px 0 0 3px; line-height: 20px; color: #dcdedf; }
.entity { position: absolute; left: 798px; top: 149px; width: 190px; height: 90px; }
.snaptip {
  position: absolute;
  left: 909px;
  top: 213px;
  padding: 0 11px 0 4px;
  border: 1px solid #666;
  background: #969696;
  color: #161616;
  line-height: 23px;
}
.viewcube { position: absolute; right: 15px; top: 14px; width: 110px; height: 120px; color: #b4b8bc; font-size: 16px; line-height: 20px; }
.viewcube svg { width: 110px; height: 120px; }
.viewcube span { position: absolute; }
.viewcube .n { left: 47px; top: 0; }
.viewcube .s { left: 47px; bottom: 0; }
.viewcube .w { left: 0; top: 50px; }
.viewcube .e { right: 0; top: 50px; }
.viewcube .c { left: 43px; top: 48px; font-size: 24px; line-height: 24px; color: #3c4046; }
.wcs {
  position: absolute;
  right: 43px;
  top: 152px;
  gap: 7px;
  width: 53px;
  height: 21px;
  border: 1px solid #a3a5b0;
  border-radius: 4px;
  background: #858793;
  color: #43464f;
  font: 13px "Liberation Sans", sans-serif;
}
.wcs svg { width: 8px; height: 8px; }
.hint {
  position: absolute;
  left: 106px;
  bottom: 51px;
  width: 304px;
  height: 152px;
  padding: 16px 0 0 58px;
  background: #84bfff;
  color: #fff;
  font-size: 23px;
  font-weight: 700;
  line-height: 40px;
}
.hint p { margin: 0; }
.hint .second { padding-left: 5px; }
.ucs { position: absolute; left: 10px; bottom: 2px; width: 90px; height: 100px; }

/* command window */
.cmd { position: absolute; left: 522px; bottom: 0; width: 350px; font-size: 15px; }
.cmd tt { font-family: "DejaVu Sans Mono", monospace; font-size: 14px; line-height: 14px; white-space: pre; }
.history { display: flex; flex-direction: column; align-items: flex-start; gap: 5px; padding: 0 0 4px 259px; }
.history span { display: flex; align-items: center; height: 20px; padding: 0 2px; border-radius: 2px; background: #54585d; color: #d3d4d5; line-height: 20px; white-space: nowrap; }
.history tt { padding: 0; }
.cmdrow { display: flex; align-items: flex-end; }
.handle { display: flex; align-items: center; gap: 12px; width: 62px; height: 32px; padding-left: 8px; background: linear-gradient(#777, #484848); border-radius: 4px 0 0 0; }
.handle b { width: 3px; height: 22px; background: repeating-linear-gradient(#999 0 1px, #555 1px 3px); margin-right: -6px; }
.handle svg { width: 12px; height: 12px; }
.handle button:last-child svg { width: 17px; height: 17px; }
.prompt { display: flex; flex: 1; height: 49px; background: #bababb; border: 1px solid #999; color: #222; border-radius: 3px 3px 0 0; }
.ptext { flex: 1; padding: 1px 0 0 3px; white-space: nowrap; }
.ptext > div { display: flex; align-items: center; gap: 0; height: 23px; line-height: 20px; }
.ptext button { height: 20px; padding: 0 2px; margin-right: 4px; border-radius: 4px; background: #a5a5a7; line-height: 20px; }
.ptext button.last { margin-right: 0; }
.ptext > div + div button:first-child { margin-left: -2px; }
.ptext strong { color: #2118c4; }
.cli { width: 17px; height: 17px; }
.cdd { width: 6px; height: 6px; margin: 0 4px; color: #666; }
.expand { width: 14px; }
.expand svg { width: 9px; height: 9px; }

.brand { position: absolute; right: 58px; bottom: 4px; width: 235px; height: 115px; padding: 0 10px 0 14px; display: flex; align-items: center; gap: 17px; background: #212f57; color: #c9ced6; }
.brand svg { width: 48px; height: 50px; }
.cn { display: flex; gap: 7px; font-size: 31px; line-height: 36px; font-weight: 700; }
.url { font: 17px/18px "DejaVu Sans", sans-serif; white-space: nowrap; }

/* status bar */
.status { display: flex; flex: none; gap: 2px; height: 17px; background: #383838; overflow: hidden; border-top: 1px solid #666; }
.layouts { flex: 1; display: flex; align-items: flex-start; color: #b9b9b9; }
.ltab { width: 61px; height: 22px; background: linear-gradient(#6a6a6a, #555); border-right: 3px solid #444; }
.ltab.on { width: 58px; color: #fff; font-weight: 700; background: #5d5d5d; }
.ltab.plus { width: 36px; font-size: 16px; }
.spanel { display: grid; height: 30px; background: #505050; border: 1px solid #808080; color: #ddd; overflow: hidden; }
.spanel button { height: 28px; align-items: flex-start; padding-top: 6px; }
.spanel svg { width: 18px; height: 18px; }
.spanel .drop { padding-top: 9px; }
.spanel .drop svg { width: 7px; height: 7px; }
.spanel .edge { border-left: 1px solid #808080; }
.spanel .modeltext { font-weight: 700; font-size: 14px; line-height: 20px; padding-top: 4px; color: #fff; }
.spanel .ratio { font-size: 13px; line-height: 18px; }
.s1 { grid-template-columns: 32px; }
.s2 { grid-template-columns: 28px 28px 16px; }
.s3 { grid-template-columns: 26px 30px 16px 26px 20px 28px 28px 16px 29px; }
.s4 { grid-template-columns: 31px 27px 24px 26px 10px; }
.s5 { grid-template-columns: 29px 16px 30px 31px; }
.s6 { grid-template-columns: 26px; }
.s7 { grid-template-columns: 28px 15px; margin-left: 5px; }
```
